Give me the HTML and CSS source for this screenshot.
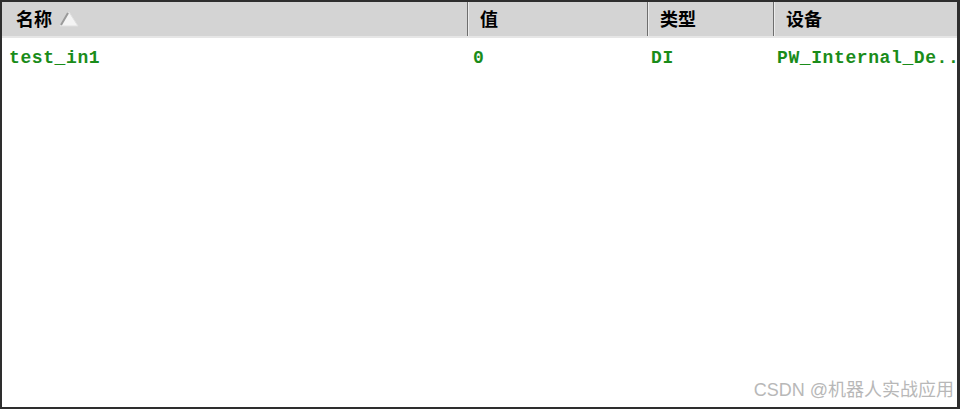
FILE: index.html
```html
<!DOCTYPE html>
<html>
<head>
<meta charset="UTF-8">
<title>变量表</title>
<link rel="stylesheet" href="styles.css">
</head>
<body>
<div class="grid">
    <div class="head">
        <div class="col c1">名称 <svg class="sort" width="22" height="16" viewBox="0 0 22 16"><polygon points="11,1 20,15 2,15" fill="#f4f4f4" stroke="#e0e0e0"/><line x1="10" y1="2" x2="3" y2="14" stroke="#9a9a9a" stroke-width="2"/></svg></div>
        <div class="col c2">值</div>
        <div class="col c3">类型</div>
        <div class="col c4">设备</div>
    </div>
    <div class="row">
        <div class="cell c1">test_in1</div>
        <div class="cell c2">0</div>
        <div class="cell c3">DI</div>
        <div class="cell c4">PW_Internal_De..</div>
    </div>
    <div class="mark">CSDN @机器人实战应用</div>
</div>
</body>
</html>
```
FILE: styles.css
```css
html, body { margin: 0; padding: 0; background: #fff; }
.grid { box-sizing: border-box; width: 960px; height: 409px; border: 2px solid #2e2e2e; border-right-width: 3px; position: relative; overflow: hidden; background: #fff; }
.head, .row { display: grid; grid-template-columns: 466px 180px 126px 1fr; }
.head { height: 36px; background: #d4d4d4; border-bottom: 2px solid #e6e6e6; box-sizing: border-box; }
.col { box-sizing: border-box; padding: 0 0 2px 12px; font-family: "Noto Sans CJK SC", sans-serif; font-weight: bold; font-size: 18px; color: #000; border-right: 1px solid #6e6e6e; box-shadow: inset 1px 0 0 #ececec; display: flex; align-items: center; height: 34px; }
.c1.col { padding-left: 14px; box-shadow: none; }
.c4.col { border-right: none; }
.sort { margin-left: 6px; margin-top: 2px; }
.row { height: 40px; align-items: center; }
.cell { font-family: "Liberation Mono", monospace; font-weight: bold; font-size: 18px; letter-spacing: 0.6px; color: #1a8c1a; padding-left: 5px; white-space: nowrap; overflow: hidden; }
.c1.cell { padding-left: 7px; }
.c3.cell, .c4.cell { padding-left: 3px; }
.mark { position: absolute; right: 3px; bottom: 6px; font-family: "Liberation Sans", "Noto Sans CJK SC", sans-serif; font-size: 18px; color: #b8b8b8; }
```
